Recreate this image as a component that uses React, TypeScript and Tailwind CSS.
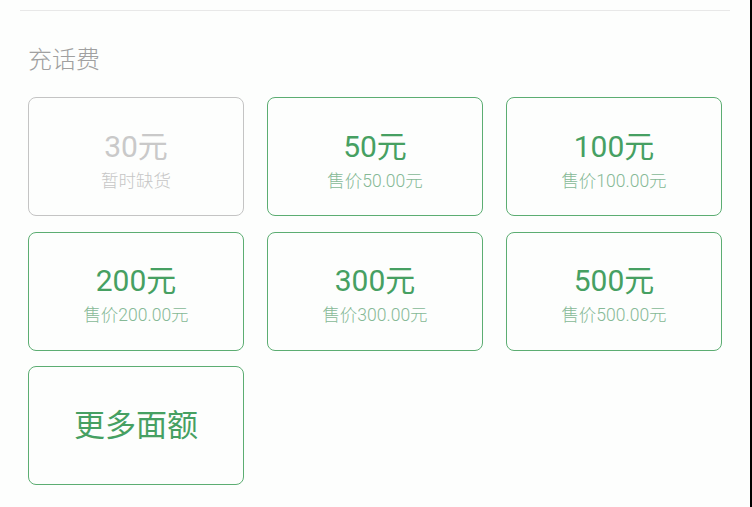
const font = { fontFamily: 'Roboto, "Noto Sans CJK SC", sans-serif' };

type Denom = {
  amount: string;
  sub: string;
  disabled?: boolean;
};

const denoms: Denom[] = [
  { amount: "30元", sub: "暂时缺货", disabled: true },
  { amount: "50元", sub: "售价50.00元" },
  { amount: "100元", sub: "售价100.00元" },
  { amount: "200元", sub: "售价200.00元" },
  { amount: "300元", sub: "售价300.00元" },
  { amount: "500元", sub: "售价500.00元" },
];

function DenomCard({ d }: { d: Denom }) {
  return (
    <div
      className={`flex h-[119px] flex-col items-center justify-center rounded-[8px] border pt-[8px] ${
        d.disabled ? "border-[#c4c4c4]" : "border-[#5cad72]"
      }`}
    >
      <span
        className={`text-[30px] leading-[34px] ${d.disabled ? "text-[#c9c9c9]" : "text-[#46a062]"}`}
      >
        {d.amount}
      </span>
      <span
        className={`mt-[6px] text-[17.5px] font-light leading-[22px] ${d.disabled ? "text-[#c6c6c6]" : "text-[#86b996]"}`}
      >
        {d.sub}
      </span>
    </div>
  );
}

export default function App() {
  return (
    <div className="flex h-[507px] w-[752px] bg-white" style={font}>
      <div className="flex-1 bg-[#fdfefd]">
        <div className="mx-[20px] mt-[10px] h-px bg-[#e8e8e8]" />
        <div className="px-[28px]">
          <h2 className="mt-[33px] text-[24px] font-light leading-[32px] text-[#a0a0a0]">充话费</h2>
          <div className="mt-[21px] grid grid-cols-3 gap-x-[23px] gap-y-[15.5px]">
            {denoms.map((d) => (
              <DenomCard key={d.amount} d={d} />
            ))}
            <div className="flex h-[119px] items-center justify-center rounded-[8px] border border-[#5cad72]">
              <span className="text-[31px] leading-[40px] text-[#46a062]">更多面额</span>
            </div>
          </div>
        </div>
      </div>
      <div className="w-[2px] bg-black" />
    </div>
  );
}
